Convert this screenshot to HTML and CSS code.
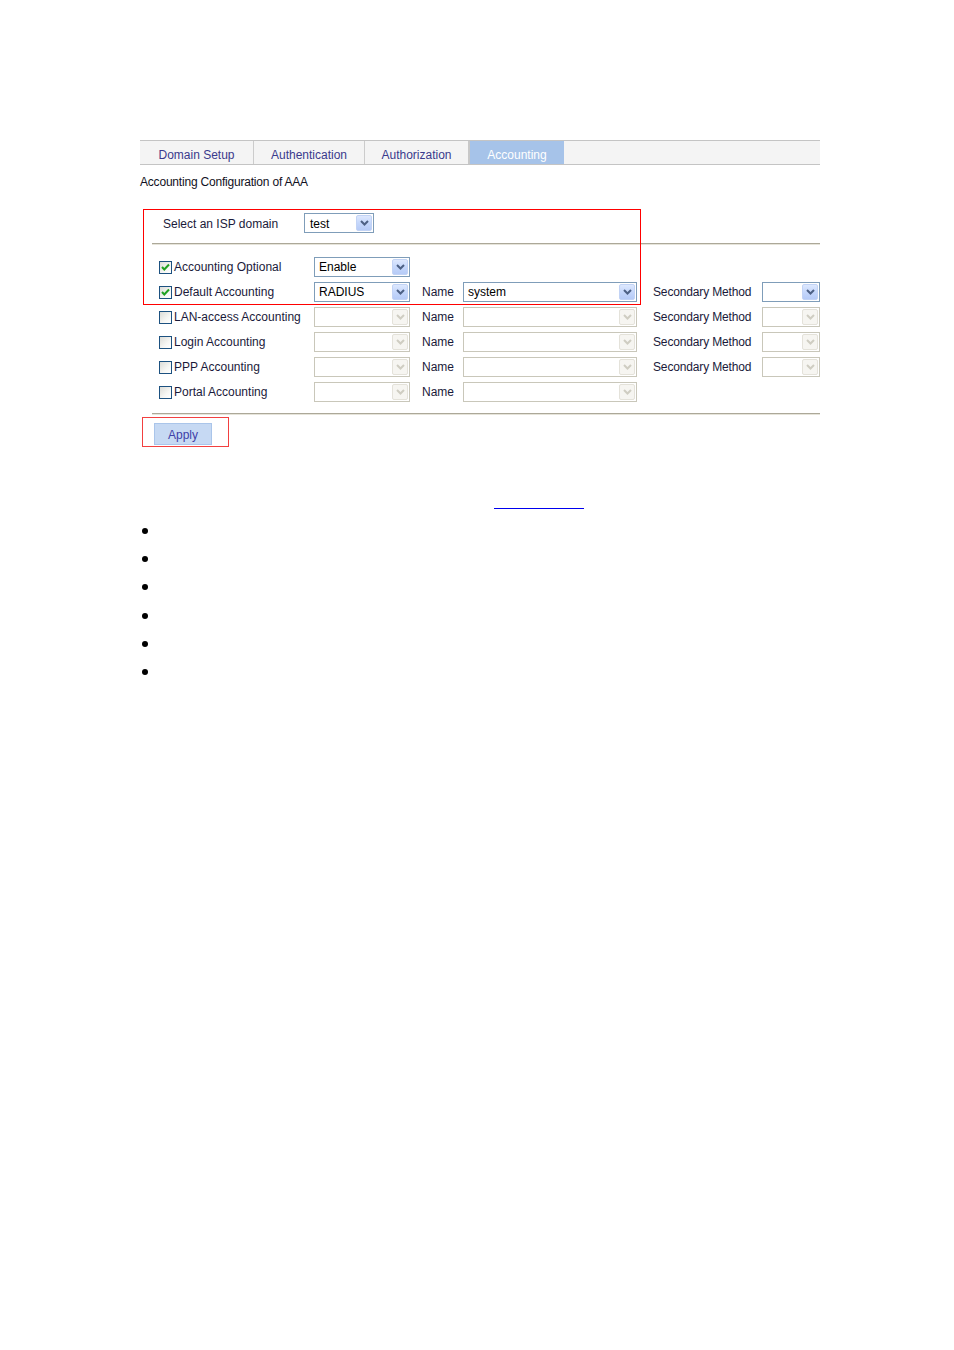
FILE: index.html
```html
<!DOCTYPE html>
<html>
<head>
<meta charset="utf-8">
<title>Accounting Configuration of AAA</title>
<link rel="stylesheet" href="styles.css">
</head>
<body>
<div class="page">
  <div class="tabs">
    <div class="tab t1">Domain Setup</div>
    <div class="tab t2">Authentication</div>
    <div class="tab t3">Authorization</div>
    <div class="tab t4 active">Accounting</div>
  </div>
  <div class="title">Accounting Configuration of AAA</div>

  <div class="form">
    <div class="isp">
      <span class="isp-label">Select an ISP domain</span>
      <div class="sel sel-isp"><span class="val">test</span><span class="arr"><svg width="9" height="6" viewBox="0 0 9 6"><path d="M1 1 L4.5 4.5 L8 1" fill="none" stroke="#4d6185" stroke-width="2"/></svg></span></div>
    </div>
    <div class="sep"></div>

    <div class="rows">
      <div class="row">
        <div class="c-check"><span class="cb on"><svg width="11" height="11" viewBox="0 0 11 11"><path d="M2 5 L4.3 7.5 L9 2.5" fill="none" stroke="#21a121" stroke-width="2"/></svg></span><span class="lbl">Accounting Optional</span></div>
        <div class="sel w1"><span class="val">Enable</span><span class="arr"><svg width="9" height="6" viewBox="0 0 9 6"><path d="M1 1 L4.5 4.5 L8 1" fill="none" stroke="#4d6185" stroke-width="2"/></svg></span></div>
      </div>
      <div class="row">
        <div class="c-check"><span class="cb on"><svg width="11" height="11" viewBox="0 0 11 11"><path d="M2 5 L4.3 7.5 L9 2.5" fill="none" stroke="#21a121" stroke-width="2"/></svg></span><span class="lbl">Default Accounting</span></div>
        <div class="sel w1"><span class="val">RADIUS</span><span class="arr"><svg width="9" height="6" viewBox="0 0 9 6"><path d="M1 1 L4.5 4.5 L8 1" fill="none" stroke="#4d6185" stroke-width="2"/></svg></span></div>
        <span class="name">Name</span>
        <div class="sel w2"><span class="val">system</span><span class="arr"><svg width="9" height="6" viewBox="0 0 9 6"><path d="M1 1 L4.5 4.5 L8 1" fill="none" stroke="#4d6185" stroke-width="2"/></svg></span></div>
        <span class="sec">Secondary Method</span>
        <div class="sel w3"><span class="val"></span><span class="arr"><svg width="9" height="6" viewBox="0 0 9 6"><path d="M1 1 L4.5 4.5 L8 1" fill="none" stroke="#4d6185" stroke-width="2"/></svg></span></div>
      </div>
      <div class="row">
        <div class="c-check"><span class="cb"></span><span class="lbl">LAN-access Accounting</span></div>
        <div class="sel w1 dis"><span class="val"></span><span class="arr"><svg width="9" height="6" viewBox="0 0 9 6"><path d="M1 1 L4.5 4.5 L8 1" fill="none" stroke="#cfcdc2" stroke-width="2"/></svg></span></div>
        <span class="name">Name</span>
        <div class="sel w2 dis"><span class="val"></span><span class="arr"><svg width="9" height="6" viewBox="0 0 9 6"><path d="M1 1 L4.5 4.5 L8 1" fill="none" stroke="#cfcdc2" stroke-width="2"/></svg></span></div>
        <span class="sec">Secondary Method</span>
        <div class="sel w3 dis"><span class="val"></span><span class="arr"><svg width="9" height="6" viewBox="0 0 9 6"><path d="M1 1 L4.5 4.5 L8 1" fill="none" stroke="#cfcdc2" stroke-width="2"/></svg></span></div>
      </div>
      <div class="row">
        <div class="c-check"><span class="cb"></span><span class="lbl">Login Accounting</span></div>
        <div class="sel w1 dis"><span class="val"></span><span class="arr"><svg width="9" height="6" viewBox="0 0 9 6"><path d="M1 1 L4.5 4.5 L8 1" fill="none" stroke="#cfcdc2" stroke-width="2"/></svg></span></div>
        <span class="name">Name</span>
        <div class="sel w2 dis"><span class="val"></span><span class="arr"><svg width="9" height="6" viewBox="0 0 9 6"><path d="M1 1 L4.5 4.5 L8 1" fill="none" stroke="#cfcdc2" stroke-width="2"/></svg></span></div>
        <span class="sec">Secondary Method</span>
        <div class="sel w3 dis"><span class="val"></span><span class="arr"><svg width="9" height="6" viewBox="0 0 9 6"><path d="M1 1 L4.5 4.5 L8 1" fill="none" stroke="#cfcdc2" stroke-width="2"/></svg></span></div>
      </div>
      <div class="row">
        <div class="c-check"><span class="cb"></span><span class="lbl">PPP Accounting</span></div>
        <div class="sel w1 dis"><span class="val"></span><span class="arr"><svg width="9" height="6" viewBox="0 0 9 6"><path d="M1 1 L4.5 4.5 L8 1" fill="none" stroke="#cfcdc2" stroke-width="2"/></svg></span></div>
        <span class="name">Name</span>
        <div class="sel w2 dis"><span class="val"></span><span class="arr"><svg width="9" height="6" viewBox="0 0 9 6"><path d="M1 1 L4.5 4.5 L8 1" fill="none" stroke="#cfcdc2" stroke-width="2"/></svg></span></div>
        <span class="sec">Secondary Method</span>
        <div class="sel w3 dis"><span class="val"></span><span class="arr"><svg width="9" height="6" viewBox="0 0 9 6"><path d="M1 1 L4.5 4.5 L8 1" fill="none" stroke="#cfcdc2" stroke-width="2"/></svg></span></div>
      </div>
      <div class="row">
        <div class="c-check"><span class="cb"></span><span class="lbl">Portal Accounting</span></div>
        <div class="sel w1 dis"><span class="val"></span><span class="arr"><svg width="9" height="6" viewBox="0 0 9 6"><path d="M1 1 L4.5 4.5 L8 1" fill="none" stroke="#cfcdc2" stroke-width="2"/></svg></span></div>
        <span class="name">Name</span>
        <div class="sel w2 dis"><span class="val"></span><span class="arr"><svg width="9" height="6" viewBox="0 0 9 6"><path d="M1 1 L4.5 4.5 L8 1" fill="none" stroke="#cfcdc2" stroke-width="2"/></svg></span></div>
      </div>
    </div>
    <div class="sep sep2"></div>
    <div class="actions"><span class="btn">Apply</span></div>
  </div>

  <div class="ref"><span class="link"></span></div>
  <ul class="bullets">
    <li></li><li></li><li></li><li></li><li></li><li></li>
  </ul>

  <div class="mark mark-top"></div>
  <div class="mark mark-apply"></div>
</div>
</body>
</html>
```

FILE: styles.css
```css
html, body {
  margin: 0;
  padding: 0;
  background: #ffffff;
}

body {
  font-family: "Liberation Sans", Arial, sans-serif;
  font-size: 12px;
  color: #1a1a3a;
}

.page {
  position: relative;
  width: 680px;
  padding: 140px 0 0 140px;
}

/* Tabs */
.tabs {
  display: flex;
  height: 23px;
  background: #f4f4f4;
  border-top: 1px solid #c4c4c4;
  border-bottom: 1px solid #c4c4c4;
}

.tab {
  display: flex;
  align-items: center;
  justify-content: center;
  color: #3a3a8c;
  font-size: 12px;
  padding-top: 5px;
  box-sizing: border-box;
  flex: none;
}

.t1 { width: 114px; border-right: 1px solid #cccccc; }
.t2 { width: 111px; border-right: 1px solid #cccccc; }
.t3 { width: 105px; border-right: 2px solid #c8c8c8; }
.t4 { width: 94px; }

.tab.active {
  background: #a6c3e9;
  color: #ffffff;
}

.title {
  margin-top: 10px;
  line-height: 14px;
  height: 14px;
  color: #111122;
  letter-spacing: -0.2px;
}

/* Form */
.form {
  margin-left: 12px;
  width: 668px;
}

.isp {
  display: flex;
  align-items: center;
  height: 20px;
  margin-top: 24px;
  padding-left: 11px;
}

.isp-label {
  width: 141px;
  padding-top: 1px;
}

.sep {
  height: 1px;
  margin-top: 10px;
  background: #aca899;
  border-bottom: 1px solid #e6e4da;
}

.rows {
  margin-top: 9px;
}

.row {
  display: flex;
  align-items: center;
  height: 25px;
  padding-left: 7px;
}

.c-check {
  display: flex;
  align-items: center;
  width: 155px;
  padding-top: 1px;
}

.cb {
  display: inline-flex;
  align-items: center;
  justify-content: center;
  width: 13px;
  height: 13px;
  box-sizing: border-box;
  border: 1px solid #1c5180;
  background: linear-gradient(135deg, #dcdcd7 0%, #f6f6f3 60%, #ffffff 100%);
  margin-right: 2px;
  margin-top: 1px;
}

.lbl {
  white-space: nowrap;
}

.name {
  margin-left: 12px;
  width: 41px;
}

.sec {
  margin-left: 16px;
  width: 109px;
  white-space: nowrap;
  letter-spacing: -0.15px;
}

/* Select boxes */
.sel {
  display: flex;
  align-items: center;
  height: 20px;
  box-sizing: border-box;
  border: 1px solid #7f9db9;
  background: #ffffff;
  padding: 1px;
  color: #000000;
  flex: none;
}

.sel .val {
  padding-left: 3px;
  flex: 1;
  white-space: nowrap;
  overflow: hidden;
}

.sel .arr {
  display: flex;
  align-items: center;
  justify-content: center;
  width: 16px;
  height: 16px;
  border-radius: 2px;
  background: linear-gradient(180deg, #dde8fe 0%, #c5d7fb 50%, #b6cbf7 100%);
  border: 1px solid #c2d3f5;
  box-sizing: border-box;
}

.sel.dis {
  border-color: #c9c7ba;
}

.sel.dis .arr {
  background: #f6f5f1;
  border-color: #e4e2da;
}

.sel-isp { width: 70px; }
.sel-isp .val { padding-left: 4px; padding-top: 1px; }
.w1 { width: 96px; }
.w2 { width: 174px; }
.w3 { width: 58px; }

.sep2 {
  margin-top: 9px;
}

.actions {
  margin-top: 8px;
  padding-left: 2px;
  height: 22px;
}

.btn {
  display: inline-flex;
  align-items: center;
  justify-content: center;
  width: 58px;
  height: 22px;
  box-sizing: border-box;
  background: #c6d9f3;
  border: 1px solid #aac5ea;
  color: #4040a8;
  font-size: 12px;
  padding-top: 1px;
}

/* Reference link and list */
.ref {
  margin-top: 49px;
  height: 14px;
  padding-left: 354px;
}

.link {
  display: inline-block;
  width: 90px;
  height: 14px;
  border-bottom: 1px solid #0000ee;
  vertical-align: top;
}

.bullets {
  list-style: none;
  margin: 9px 0 0 0;
  padding: 0;
}

.bullets li {
  height: 28.2px;
  display: flex;
  align-items: center;
}

.bullets li::before {
  content: "";
  display: block;
  width: 6px;
  height: 6px;
  border-radius: 50%;
  background: #000000;
  margin-left: 2px;
}

/* Red annotation boxes */
.mark {
  position: absolute;
  border: 1px solid #ff0000;
  box-sizing: border-box;
  pointer-events: none;
}

.mark-top {
  left: 143px;
  top: 209px;
  width: 498px;
  height: 96px;
}

.mark-apply {
  left: 142px;
  top: 417px;
  width: 87px;
  height: 30px;
  border-color: #f24040;
}
```
